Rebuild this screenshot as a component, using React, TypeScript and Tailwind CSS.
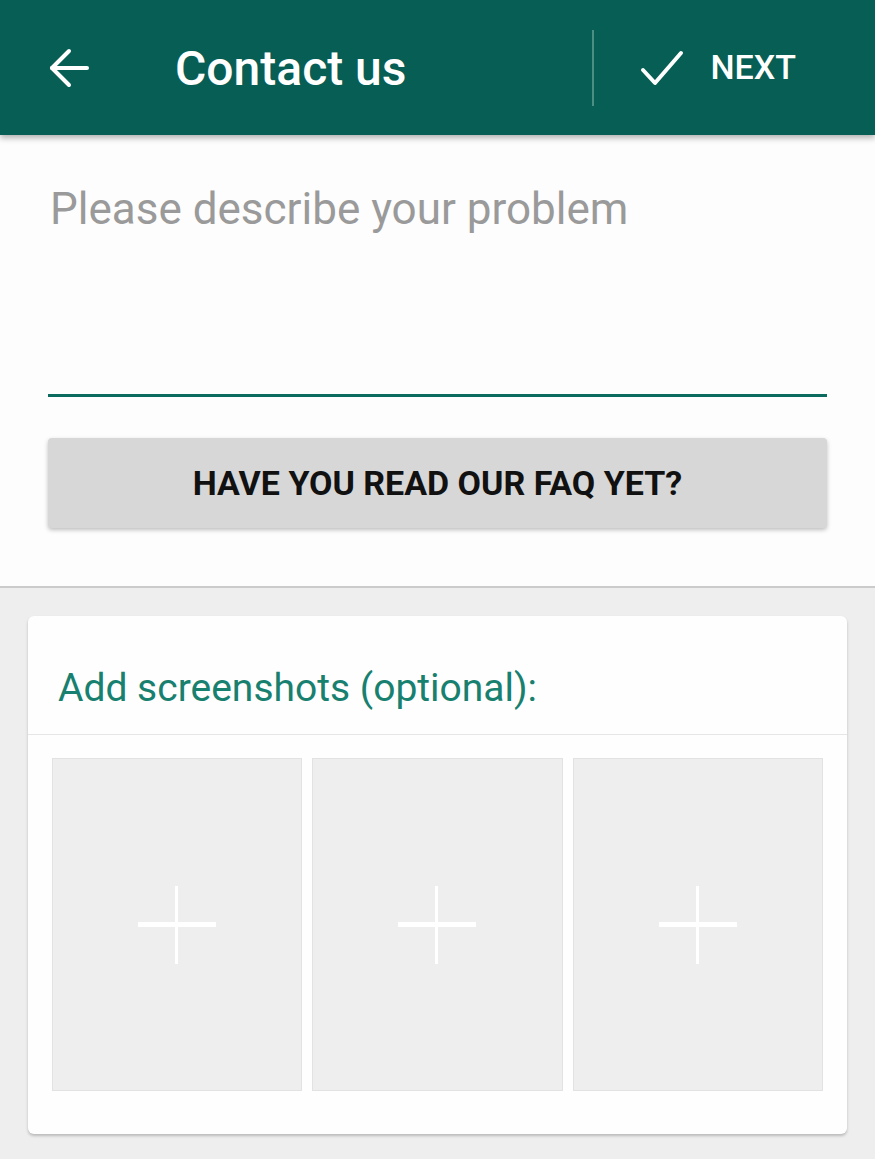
import React from 'react';

const font = { fontFamily: 'Roboto, "Noto Sans", sans-serif' };

const BackArrow = () => (
  <svg width="40" height="40" viewBox="0 0 40 40" fill="none" stroke="white" strokeWidth="4" strokeLinecap="round" strokeLinejoin="round">
    <path d="M38 20H3" />
    <path d="M20 3L3 20l17 17" />
  </svg>
);

const Check = () => (
  <svg width="44" height="36" viewBox="0 0 44 36" fill="none" stroke="white" strokeWidth="4" strokeLinecap="round" strokeLinejoin="round">
    <path d="M3 20l12 13L41 3" />
  </svg>
);

const Tile = () => (
  <div className="flex h-full items-center justify-center border border-[#e2e2e2] bg-[#eeeeee]">
    <div className="relative h-[78px] w-[78px]">
      <span className="absolute left-0 top-[36px] h-[5px] w-[78px] bg-white" />
      <span className="absolute left-[37px] top-0 h-[78px] w-[3px] bg-white" />
    </div>
  </div>
);

export default function App() {
  return (
    <div className="flex min-h-[1159px] w-[875px] flex-col bg-[#eeeeee]" style={font}>
      <header className="relative z-10 flex h-[135px] items-center bg-[#075e54] shadow-[0_3px_6px_rgba(0,0,0,0.3)]">
        <div className="ml-[49px] flex items-center">
          <BackArrow />
        </div>
        <h1 className="ml-[86px] pt-[2px] text-[48px] font-medium text-white">Contact us</h1>
        <div className="ml-auto h-[76px] w-[2px] bg-[#4a8e84]" />
        <div className="ml-[46px] mr-[79px] flex items-center gap-[26px]">
          <Check />
          <span className="text-[34px] font-medium text-white">NEXT</span>
        </div>
      </header>

      <section className="border-b-2 border-[#cbcbcb] bg-[#fdfdfd] px-[48px] pb-[58px] pt-[46px]">
        <div className="border-b-[3px] border-[#0b6b5e] pb-[157px] pl-[2px]">
          <p className="text-[44px] leading-[56px] text-[#9a9a9a]">Please describe your problem</p>
        </div>
        <button className="mt-[41px] flex h-[90px] w-full items-center justify-center rounded-[4px] bg-[#d7d7d7] shadow-[0_2px_4px_rgba(0,0,0,0.25)]">
          <span className="text-[34px] font-bold text-[#111111]">HAVE YOU READ OUR FAQ YET?</span>
        </button>
      </section>

      <div className="px-[28px] pt-[28px]">
        <div className="rounded-[6px] bg-[#fefefe] shadow-[0_2px_3px_rgba(0,0,0,0.22)]">
          <div className="flex h-[119px] items-center border-b border-[#e6e6e6] px-[30px] pt-[26px]">
            <h2 className="text-[39px] text-[#17806f]">Add screenshots (optional):</h2>
          </div>
          <div className="grid grid-cols-3 gap-[10px] px-[24px] pb-[43px] pt-[23px]">
            <div className="h-[333px]"><Tile /></div>
            <div className="h-[333px]"><Tile /></div>
            <div className="h-[333px]"><Tile /></div>
          </div>
        </div>
      </div>
    </div>
  );
}
